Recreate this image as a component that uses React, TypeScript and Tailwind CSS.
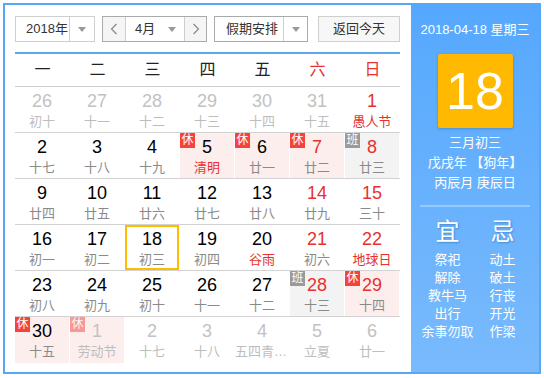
import React from 'react';

type Day = {
  n: number;
  lunar: string;
  dim?: boolean;
  redNum?: boolean;
  redLunar?: boolean;
  tag?: '休' | '班';
  today?: boolean;
};

const weeks: Day[][] = [
  [
    { n: 26, lunar: '初十', dim: true },
    { n: 27, lunar: '十一', dim: true },
    { n: 28, lunar: '十二', dim: true },
    { n: 29, lunar: '十三', dim: true },
    { n: 30, lunar: '十四', dim: true },
    { n: 31, lunar: '十五', dim: true },
    { n: 1, lunar: '愚人节', redNum: true, redLunar: true },
  ],
  [
    { n: 2, lunar: '十七' },
    { n: 3, lunar: '十八' },
    { n: 4, lunar: '十九' },
    { n: 5, lunar: '清明', redLunar: true, tag: '休' },
    { n: 6, lunar: '廿一', tag: '休' },
    { n: 7, lunar: '廿二', redNum: true, tag: '休' },
    { n: 8, lunar: '廿三', redNum: true, tag: '班' },
  ],
  [
    { n: 9, lunar: '廿四' },
    { n: 10, lunar: '廿五' },
    { n: 11, lunar: '廿六' },
    { n: 12, lunar: '廿七' },
    { n: 13, lunar: '廿八' },
    { n: 14, lunar: '廿九', redNum: true },
    { n: 15, lunar: '三十', redNum: true },
  ],
  [
    { n: 16, lunar: '初一' },
    { n: 17, lunar: '初二' },
    { n: 18, lunar: '初三', today: true },
    { n: 19, lunar: '初四' },
    { n: 20, lunar: '谷雨', redLunar: true },
    { n: 21, lunar: '初六', redNum: true },
    { n: 22, lunar: '地球日', redNum: true, redLunar: true },
  ],
  [
    { n: 23, lunar: '初八' },
    { n: 24, lunar: '初九' },
    { n: 25, lunar: '初十' },
    { n: 26, lunar: '十一' },
    { n: 27, lunar: '十二' },
    { n: 28, lunar: '十三', redNum: true, tag: '班' },
    { n: 29, lunar: '十四', redNum: true, tag: '休' },
  ],
  [
    { n: 30, lunar: '十五', tag: '休' },
    { n: 1, lunar: '劳动节', dim: true, tag: '休' },
    { n: 2, lunar: '十七', dim: true },
    { n: 3, lunar: '十八', dim: true },
    { n: 4, lunar: '五四青年节', dim: true },
    { n: 5, lunar: '立夏', dim: true },
    { n: 6, lunar: '廿一', dim: true },
  ],
];

const weekdays = ['一', '二', '三', '四', '五', '六', '日'];
const yi = ['祭祀', '解除', '教牛马', '出行', '余事勿取'];
const ji = ['动土', '破土', '行丧', '开光', '作梁'];

const Caret = () => (
  <span className="block w-0 h-0 border-l-[4px] border-r-[4px] border-t-[5px] border-l-transparent border-r-transparent border-t-[#999]" />
);

const Chevron = ({ dir }: { dir: 'l' | 'r' }) => (
  <svg width="8" height="12" viewBox="0 0 8 12" fill="none" stroke="#888" strokeWidth="1.2">
    {dir === 'l' ? <polyline points="6.5,1 1.5,6 6.5,11" /> : <polyline points="1.5,1 6.5,6 1.5,11" />}
  </svg>
);

const Cell: React.FC<{ d: Day }> = ({ d }) => {
  const bg = d.tag === '休' ? 'bg-[#fdeeee]' : d.tag === '班' ? 'bg-[#f3f3f3]' : '';
  const numColor = d.dim ? 'text-[#c2c2c2]' : d.redNum ? 'text-[#e8312f]' : 'text-black';
  const lunarColor = d.redLunar && !d.dim ? 'text-[#e8312f]' : d.dim ? 'text-[#bdbdbd]' : 'text-[#8a8a8a]';
  return (
    <div className="w-[55px] h-full">
      <div
        className={`relative w-[54px] h-full flex flex-col items-center pt-[4px] ${bg} ${
          d.today ? 'shadow-[inset_0_0_0_2px_#ffbb00]' : ''
        }`}
      >
        {d.tag && (
          <span
            className={`absolute left-0 top-0 w-[15px] h-[15px] text-[12px] leading-[15px] text-center text-white ${
              d.tag === '休' ? 'bg-[#f5433b]' : 'bg-[#9a9a9a]'
            } ${d.dim ? 'opacity-50' : ''}`}
          >
            {d.tag}
          </span>
        )}
        <span className={`text-[18px] leading-[20px] ${numColor}`}>{d.n}</span>
        <span className={`mt-[3px] text-[13px] leading-[15px] max-w-[54px] truncate ${lunarColor}`}>
          {d.lunar}
        </span>
      </div>
    </div>
  );
};

export default function App() {
  return (
    <div className="w-[544px] h-[378px] bg-white p-[3px] font-['Liberation_Sans','Noto_Sans_CJK_SC',sans-serif]">
      <div className="w-[538px] h-[371px] border-2 border-[#58a7f6] flex">
        {/* left: month grid */}
        <div className="w-[406px] bg-white pl-[10px] pt-[11px]">
          <div className="flex h-[26px] text-[13px] text-[#333]">
            <div className="w-[80px] flex border border-[#cfcfcf]">
              <span className="flex-1 pl-[10px] leading-[24px]">2018年</span>
              <span className="w-[25px] border-l border-[#cfcfcf] flex items-center justify-center">
                <Caret />
              </span>
            </div>
            <div className="ml-[7px] w-[105px] flex border border-[#aaa]">
              <span className="w-[23px] bg-[#f5f5f5] border-r border-[#cfcfcf] flex items-center justify-center">
                <Chevron dir="l" />
              </span>
              <span className="flex-1 flex items-center pl-[9px] pr-[8px]">
                <span className="flex-1 leading-[24px]">4月</span>
                <Caret />
              </span>
              <span className="w-[22px] bg-[#f5f5f5] border-l border-[#cfcfcf] flex items-center justify-center">
                <Chevron dir="r" />
              </span>
            </div>
            <div className="ml-[7px] w-[94px] flex border border-[#aaa]">
              <span className="flex-1 pl-[11px] leading-[24px]">假期安排</span>
              <span className="w-[24px] border-l border-[#cfcfcf] flex items-center justify-center">
                <Caret />
              </span>
            </div>
            <button className="ml-[10px] w-[82px] border border-[#cfcfcf] bg-[#f7f7f7] leading-[24px] text-center">
              返回今天
            </button>
          </div>

          <div className="w-[385px] mt-[10px] h-[2px] bg-[#5aa8f4]" />

          <div className="w-[385px] flex h-[33px] border-b border-[#cfcfcf]">
            {weekdays.map((w, i) => (
              <div
                key={w}
                className={`w-[55px] text-center text-[16px] leading-[32px] ${i >= 5 ? 'text-[#e8312f]' : 'text-[#222]'}`}
              >
                {w}
              </div>
            ))}
          </div>

          {weeks.map((week, i) => (
            <div
              key={i}
              className={`w-[385px] flex h-[46px] ${i < weeks.length - 1 ? 'border-b border-[#d2d2d2]' : ''}`}
            >
              {week.map((d, j) => (
                <Cell key={j} d={d} />
              ))}
            </div>
          ))}
        </div>

        {/* right: today detail */}
        <div className="w-[128px] bg-gradient-to-b from-[#55a8fe] to-[#79bafc] flex flex-col items-center pt-[16px] text-white">
          <div className="text-[13px] leading-[18px] whitespace-nowrap">2018-04-18 星期三</div>
          <div className="mt-[15px] w-[75px] h-[74px] bg-[#ffb900] rounded-[2px] shadow-[0_1px_3px_rgba(0,0,0,0.2)] text-center text-[52px] leading-[74px]">
            18
          </div>
          <div className="mt-[5px] text-[13px] leading-[20px] text-center whitespace-nowrap">
            <div>三月初三</div>
            <div>戊戌年 【狗年】</div>
            <div>丙辰月 庚辰日</div>
          </div>
          <div className="mt-[12px] w-[110px] h-[2px] bg-white/30" />
          <div className="w-[110px] grid grid-cols-2 mt-[10px]">
            <div className="flex flex-col items-center">
              <span className="text-[24px] leading-[30px] [text-shadow:1px_1px_2px_rgba(0,60,140,0.35)]">宜</span>
              <div className="mt-[4px] text-[13px] leading-[18px] text-center">
                {yi.map((t) => (
                  <div key={t}>{t}</div>
                ))}
              </div>
            </div>
            <div className="flex flex-col items-center">
              <span className="text-[24px] leading-[30px] [text-shadow:1px_1px_2px_rgba(0,60,140,0.35)]">忌</span>
              <div className="mt-[4px] text-[13px] leading-[18px] text-center">
                {ji.map((t) => (
                  <div key={t}>{t}</div>
                ))}
              </div>
            </div>
          </div>
        </div>
      </div>
    </div>
  );
}
